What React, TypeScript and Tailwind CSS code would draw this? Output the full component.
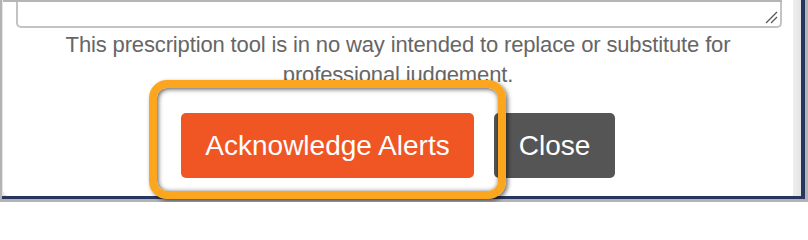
export default function App() {
  return (
    <div className="h-[202px] w-[808px] overflow-hidden bg-[#b3b3b3] pb-[3px] pl-[2px] pr-[3px] font-['Liberation_Sans',Arial,sans-serif]">
      <div className="flex h-[199px] border-b-[3px] border-r-4 border-[#26365f] bg-[#e6e6e6] pl-[1px]">
        <div className="flex flex-1 flex-col rounded-bl-[6px] bg-white">
          {/* scrolling body, clipped */}
          <div className="h-[83px] overflow-hidden">
            <div className="mr-[11px] h-[2px] bg-[#b5b5b5]" />
            <div className="relative ml-[13px] mr-[11px] h-[26px] rounded-b-[5px] border-2 border-t-0 border-[#c3c3c3]">
              <svg
                viewBox="0 0 14 14"
                className="absolute bottom-[2px] right-[2px] h-[14px] w-[14px]"
                fill="none"
                stroke="#555"
                strokeWidth="1.3"
              >
                <path d="M2 13L13 2" />
                <path d="M7 13L13 7" />
              </svg>
            </div>
            <p className="mt-[2px] text-center text-[22px] leading-[30px] tracking-[-0.14px] text-[#666]">
              This prescription tool is in no way intended to replace or substitute for
              <br />
              professional judgement.
            </p>
          </div>

          {/* footer */}
          <div className="flex justify-center gap-[20px] pt-[30px]">
            <div className="relative">
              <button
                type="button"
                className="h-[65px] w-[293px] rounded-[5px] bg-[#f05524] text-[28px] text-white"
              >
                Acknowledge Alerts
              </button>
              <div className="pointer-events-none absolute -bottom-[21px] -left-[32px] -right-[32px] -top-[33px] rounded-[18px] border-[8px] border-[#fca61f] shadow-[2px_2px_4px_rgba(0,0,0,0.55),inset_1px_1px_5px_rgba(0,0,0,0.7)]" />
            </div>
            <button
              type="button"
              className="h-[65px] w-[121px] rounded-[5px] bg-[#555555] text-[28px] text-white"
            >
              Close
            </button>
          </div>
        </div>
        <div className="w-[8px] rounded-bl-[4px] bg-gradient-to-r from-[#efefef] to-[#e3e3e3]" />
      </div>
    </div>
  );
}
